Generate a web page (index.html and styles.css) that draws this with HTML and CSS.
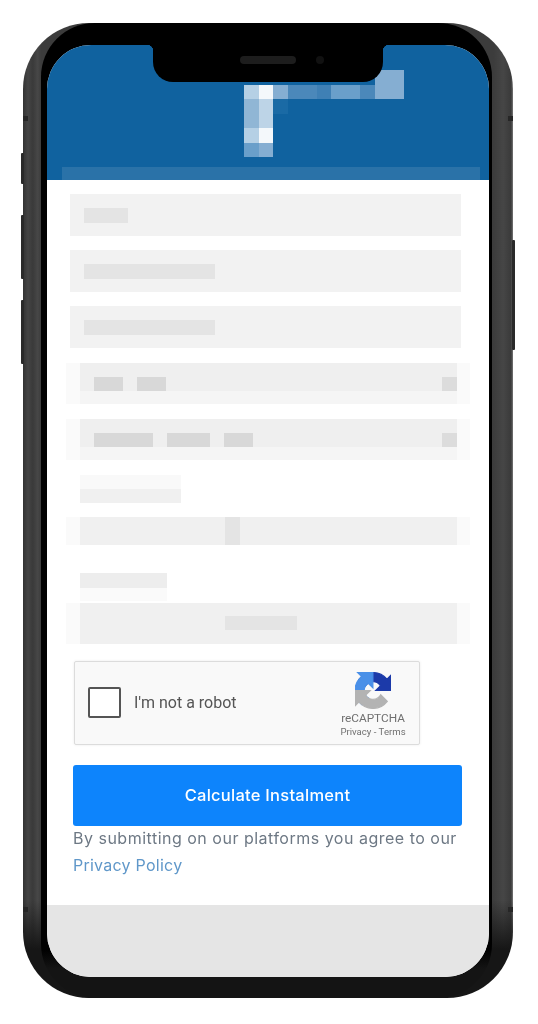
FILE: index.html
```html
<!DOCTYPE html>
<html lang="en">
<head>
<meta charset="utf-8">
<title>Calculate Instalment</title>
<link rel="stylesheet" href="styles.css">
</head>
<body>
<div class="phone">
  <span class="side-btn btn-silent"></span>
  <span class="side-btn btn-vol-up"></span>
  <span class="side-btn btn-vol-down"></span>
  <span class="side-btn btn-power"></span>
  <span class="antenna ant-tl"></span>
  <span class="antenna ant-tr"></span>
  <span class="antenna ant-bl"></span>
  <span class="antenna ant-br"></span>
  <div class="bezel">
    <div class="screen">
      <div class="notch"><span class="speaker"></span><span class="camera"></span></div>
      <header class="header">
        <div class="logo">
          <div class="logo-row"><i></i><i></i><i></i><i></i><i></i><i></i><i></i><i></i><i></i><b class="s5"></b><b class="s5"></b></div>
          <div class="logo-row"><b class="s2"></b><b class="s1"></b><b class="s5"></b><b class="s7"></b><b class="s7"></b><b class="s8"></b><b class="s6"></b><b class="s6"></b><b class="s7"></b><b class="s5"></b><b class="s5"></b></div>
          <div class="logo-row"><b class="s4"></b><b class="s3"></b><b class="s9"></b></div>
          <div class="logo-row"><b class="s4"></b><b class="s3"></b></div>
          <div class="logo-row"><b class="s2"></b><b class="s1"></b></div>
          <div class="logo-row"><b class="s6"></b><b class="s5"></b></div>
        </div>
        <div class="band"></div>
      </header>
      <main class="content">
        <div class="field"><span class="blur-text w44"></span></div>
        <div class="field"><span class="blur-text w131"></span></div>
        <div class="field"><span class="blur-text w131"></span></div>
        <div class="select">
          <span class="chip w29"></span><span class="chip w29 gap14"></span>
          <span class="chip end"></span>
        </div>
        <div class="select">
          <span class="chip w59"></span><span class="chip w43 gap14"></span><span class="chip w29 gap14"></span>
          <span class="chip end"></span>
        </div>
        <div class="label w101"></div>
        <div class="input-hazy"><span class="cursor"></span></div>
        <div class="label w87"></div>
        <div class="input-tall"><span class="value"></span></div>
        <div class="captcha">
          <span class="checkbox"></span>
          <span class="captcha-text">I'm not a robot</span>
          <div class="captcha-brand">
            <svg class="captcha-logo" viewBox="0 0 64 64" aria-hidden="true">
              <path class="logo-dark" d="M64 31.955l-.033-1.37V4.687l-7.16 7.16C50.948 4.674 42.033.093 32.05.093c-10.4 0-19.622 4.96-25.458 12.64l11.736 11.86a15.55 15.55 0 0 1 4.754-5.334c2.05-1.6 4.952-2.906 8.968-2.906.485 0 .86.057 1.135.163 4.976.393 9.288 3.14 11.828 7.124l-8.307 8.307 32.3.01"/>
              <path class="logo-blue" d="M31.862.094l-1.37.033H4.594l7.16 7.16C4.58 13.147 0 22.06 0 32.046c0 10.4 4.96 19.622 12.64 25.458l11.86-11.736a15.55 15.55 0 0 1-5.334-4.754c-1.6-2.05-2.906-4.952-2.906-8.968 0-.485.057-.86.163-1.135.393-4.976 3.14-9.288 7.124-11.828l8.307 8.307.01-32.3"/>
              <path class="logo-gray" d="M.001 32.045l.033 1.37v25.898l7.16-7.16c5.86 7.173 14.774 11.754 24.76 11.754 10.4 0 19.622-4.96 25.458-12.64l-11.736-11.86a15.55 15.55 0 0 1-4.754 5.334c-2.05 1.6-4.952 2.906-8.968 2.906-.485 0-.86-.057-1.135-.163-4.976-.393-9.288-3.14-11.828-7.124l8.307-8.307-32.3-.01"/>
            </svg>
            <span class="brand-name">reCAPTCHA</span>
            <span class="brand-links">Privacy - Terms</span>
          </div>
        </div>
        <button class="submit" type="button"><span class="submit-label">Calculate Instalment</span></button>
        <p class="notice">By submitting on our platforms you agree to our <a class="notice-link" href="#">Privacy Policy</a></p>
      </main>
      <footer class="footer"></footer>
    </div>
  </div>
</div>
</body>
</html>
```
FILE: styles.css
```css
* { box-sizing: border-box; }

html, body { margin: 0; background: #fff; }

body { padding: 23px 0 0 23px; height: 1024px; overflow: hidden; }

.phone {
  position: relative;
  width: 490px;
  height: 975px;
  padding: 0 21px 0 18px;
  border-radius: 66px;
  background:
    linear-gradient(180deg, rgba(22,22,22,0) 90%, #161616 95%),
    linear-gradient(90deg, #333 0, #444 1%, #3a3a3a 2%, #474747 3%, #3c3c3c 3.7%, #3c3c3c 96%, #464646 98%, #3a3a3a 99.6%, #777 100%);
}

.side-btn { position: absolute; width: 3px; background: #2a2a2a; border-radius: 1px; }
.btn-silent { left: -2px; top: 130px; height: 31px; }
.btn-vol-up { left: -2px; top: 192px; height: 64px; }
.btn-vol-down { left: -2px; top: 277px; height: 64px; }
.btn-power { right: -2px; top: 217px; height: 110px; }

.antenna { position: absolute; width: 5px; height: 5px; background: #262626; }
.ant-tl { left: 0; top: 93px; }
.ant-tr { right: 0; top: 93px; }
.ant-bl { left: 0; top: 884px; }
.ant-br { right: 0; top: 884px; }

.bezel {
  height: 100%;
  padding: 22px 3px 21px 6px;
  border-radius: 54px;
  background: linear-gradient(#000 95%, #141414 97%);
}

.screen {
  position: relative;
  display: flex;
  flex-direction: column;
  height: 100%;
  overflow: hidden;
  border-radius: 44px;
  background: #fff;
}

.notch {
  position: absolute;
  top: 0;
  left: 106px;
  width: 230px;
  height: 37px;
  display: flex;
  align-items: center;
  justify-content: center;
  gap: 20px;
  padding: 0 0 8px 28px;
  background: #000;
  border-radius: 0 0 20px 20px;
}

.notch::before, .notch::after {
  content: "";
  position: absolute;
  top: 0;
  width: 6px;
  height: 6px;
}
.notch::before { left: -6px; background: radial-gradient(circle at 0 100%, transparent 6px, #000 6.5px); }
.notch::after { right: -6px; background: radial-gradient(circle at 100% 100%, transparent 6px, #000 6.5px); }

.speaker { width: 56px; height: 8px; border-radius: 4px; background: #1d1d1d; }
.camera { width: 8px; height: 8px; border-radius: 50%; background: #111; }

.header {
  display: flex;
  flex-direction: column;
  flex: none;
  height: 135px;
  padding-top: 25px;
  background: #10629f;
}

.logo { margin-left: 197px; }
.logo-row { display: flex; height: 14.5px; }
.logo-row i, .logo-row b { flex: none; width: 14.5px; }
.s1 { background: #f4f8fb; }
.s2 { background: #b5d0e5; }
.s3 { background: #bdd4e7; }
.s4 { background: #90b6d5; }
.s5 { background: #85aed2; }
.s6 { background: #6a9fca; }
.s7 { background: #4b88ba; }
.s8 { background: #3f80b5; }
.s9 { background: #1a6aa5; }

.band {
  height: 13px;
  margin: auto 9px 0 15px;
  background: #2a72a8;
}

.content {
  display: flex;
  flex-direction: column;
  flex: 1;
  padding: 14px 27px 0 26px;
  background: #fff;
}

.blur-text, .chip, .cursor, .value { display: block; }

.field {
  display: flex;
  align-items: center;
  height: 42px;
  margin: 0 1px 14px -3px;
  padding-left: 14px;
  background: #f2f2f2;
  filter: blur(.7px);
}

.blur-text { height: 15px; background: #e4e4e4; }
.w44 { width: 44px; }
.w131 { width: 131px; }

.select {
  display: flex;
  align-items: flex-start;
  height: 41px;
  margin: 1px 5px 14px 7px;
  padding: 14px 0 0 14px;
  background: linear-gradient(#efefef 68%, #f5f5f5 68%);
  box-shadow: -14px 0 0 #fafafa, 13px 0 0 #fafafa;
  filter: blur(.7px);
}

.chip { height: 14px; background: #d8d8d8; }
.w29 { width: 29px; }
.w43 { width: 43px; }
.w59 { width: 59px; }
.gap14 { margin-left: 14px; }
.chip.end { width: 15px; margin-left: auto; background: #dcdcdc; }

.label {
  height: 28px;
  margin-left: 7px;
  flex: none;
  background: linear-gradient(#f9f9f9 50%, #f0f0f0 50%);
  filter: blur(.7px);
}
.label.w101 { width: 101px; margin-top: 1px; }
.label.w87 { width: 87px; margin-top: 28px; background: linear-gradient(#ededed 55%, #fafafa 55%); }

.input-hazy {
  position: relative;
  flex: none;
  height: 28px;
  margin: 14px 5px 0 7px;
  background: #f0f0f0;
  box-shadow: -14px 0 0 #fafafa, 13px 0 0 #fafafa;
  filter: blur(.7px);
}
.cursor { position: absolute; left: 145px; top: 0; width: 15px; height: 28px; background: #e4e4e4; }

.input-tall {
  display: flex;
  flex: none;
  height: 41px;
  margin: 2px 5px 0 7px;
  padding: 13px 0 0 145px;
  background: #f0f0f0;
  box-shadow: -14px 0 0 #fafafa, 13px 0 0 #fafafa;
  filter: blur(.7px);
}
.value { width: 72px; height: 14px; background: #e4e4e4; }

.captcha {
  display: flex;
  align-items: center;
  flex: none;
  width: 346px;
  height: 84px;
  margin: 17px 0 0 1px;
  padding: 0 14px 2px 13px;
  background: #f9f9f9;
  border: 1px solid #dcdcdc;
  border-radius: 2px;
  box-shadow: 0 0 3px rgba(0,0,0,.08);
}

.checkbox {
  flex: none;
  width: 33px;
  height: 31px;
  background: #fff;
  border: 2px solid #555;
  border-radius: 2px;
}

.captcha-text {
  margin-left: 13px;
  font: 16px "Roboto", sans-serif;
  color: #555;
  filter: blur(.4px);
}

.captcha-brand {
  display: flex;
  flex-direction: column;
  align-items: center;
  margin-left: auto;
  width: 66px;
  margin-right: -1px;
  padding-top: 6px;
}
.captcha-logo { width: 36px; height: 37px; filter: blur(.4px); }
.logo-dark { fill: #1c3aa9; stroke: #1c3aa9; stroke-width: 2; }
.logo-blue { fill: #4a90e8; stroke: #4a90e8; stroke-width: 2; }
.logo-gray { fill: #b3b3b3; stroke: #b3b3b3; stroke-width: 2; }
.brand-name { margin-top: 2px; font: 11.8px/14px "Roboto", sans-serif; color: #707070; white-space: nowrap; filter: blur(.4px); }
.brand-links { font: 9.6px/13px "Roboto", sans-serif; color: #707070; white-space: nowrap; filter: blur(.4px); }

.submit {
  display: block;
  flex: none;
  width: 389px;
  height: 61px;
  margin-top: 20px;
  padding: 0;
  border: 0;
  border-radius: 3px;
  background: #0d84fc;
  color: #fff;
  font: 500 16.5px "Inter", sans-serif;
  letter-spacing: .25px;
}

.submit-label { display: block; margin-top: -1px; filter: blur(.3px); }

.notice {
  margin: -1px 0 0;
  width: 410px;
  font: 16px/27px "Inter", sans-serif;
  letter-spacing: .5px;
  color: #6d7884;
  filter: blur(.35px);
}
.notice-link { color: #5f97c9; text-decoration: none; display: block; letter-spacing: .25px; }

.footer { flex: none; height: 72px; background: #e5e5e5; }
```
